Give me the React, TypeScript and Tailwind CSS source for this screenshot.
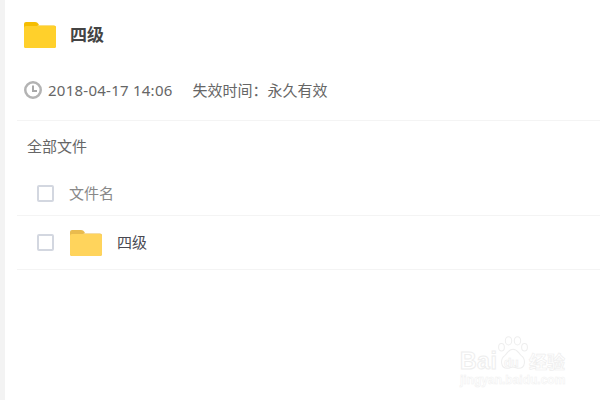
function FolderIcon({ tab, body }: { tab: string; body: string }) {
  return (
    <svg width="32" height="26" viewBox="0 0 32 26" className="shrink-0">
      <path d="M0 2a2 2 0 0 1 2-2h9c2 0 3 1 4 3h-15z" fill={tab} />
      <path d="M0 3h13l2 .5h15a2 2 0 0 1 2 2V24a2 2 0 0 1-2 2H2a2 2 0 0 1-2-2z" fill={tab} />
      <rect x="0" y="4" width="32" height="22" rx="2" fill={body} />
    </svg>
  );
}

function ClockIcon() {
  return (
    <svg width="18" height="18" viewBox="0 0 18 18" fill="none" className="shrink-0">
      <circle cx="9" cy="9" r="7.75" stroke="#b3b3b3" strokeWidth="2.5" />
      <path d="M9 4.5V10h4" stroke="#a8a8a8" strokeWidth="2" />
    </svg>
  );
}

function Checkbox() {
  return <span className="block size-[17px] shrink-0 rounded-[2px] border-2 border-[#d3d7e0] bg-white" />;
}

function Watermark() {
  return (
    <div className="absolute left-[460px] top-[335px] h-[52px] w-[108px] font-['Liberation_Sans',sans-serif] text-white">
      <span className="absolute left-0 top-[15px] text-[23px] font-bold leading-none tracking-[0.5px] [-webkit-text-stroke:1px_#eeeeee]">
        Bai
      </span>
      <svg width="32" height="36" viewBox="0 0 50 52" fill="none" stroke="#eeeeee" strokeWidth="1.6" className="absolute left-[37px] top-0">
        <ellipse cx="7" cy="17" rx="4.5" ry="6" />
        <ellipse cx="18" cy="7" rx="5" ry="6.5" />
        <ellipse cx="32" cy="7" rx="5" ry="6.5" />
        <ellipse cx="43" cy="17" rx="4.5" ry="6" />
        <path d="M25 20c-7 0-8 6-13 10-7 5-7 20 4 20 3 0 6-2 9-2s6 2 9 2c11 0 11-15 4-20-5-4-6-10-13-10z" />
      </svg>
      <span className="absolute left-[44px] top-[22px] text-[12px] font-bold leading-none text-white [-webkit-text-stroke:0.6px_#eeeeee]">
        du
      </span>
      <span className="absolute left-[69px] top-[17px] font-['Noto_Sans_CJK_SC',sans-serif] text-[18px] font-bold leading-none [-webkit-text-stroke:0.7px_#eeeeee]">
        经验
      </span>
      <span className="absolute left-0 top-[39px] text-[12px] font-bold leading-none [-webkit-text-stroke:0.5px_#f0f0f0]">
        jingyan.baidu.com
      </span>
    </div>
  );
}

export default function App() {
  return (
    <div className="relative flex h-[400px] w-[600px] overflow-hidden bg-white font-['Noto_Sans','Noto_Sans_CJK_SC',sans-serif]">
      <div className="w-[5px] shrink-0 bg-[#f3f3f3]" />
      <main className="min-w-0 flex-1 pl-[12px]">
        <div className="flex h-[121px] flex-col border-b border-[#f4f4f4] pl-[7px]">
          <div className="flex items-center gap-[14px] pt-[19px]">
            <FolderIcon tab="#f5bd00" body="#ffd02b" />
            <h1 className="-translate-y-[1px] font-['Noto_Sans_CJK_SC',sans-serif] text-[17px] font-bold leading-[32px] text-[#444444]">四级</h1>
          </div>
          <div className="mt-[29px] flex items-center text-[15px] leading-[20px] text-[#666666]">
            <ClockIcon />
            <span className="ml-[6px] tracking-[0.25px]">2018-04-17 14:06</span>
            <span className="ml-[20px] font-['Noto_Sans_CJK_SC',sans-serif]">失效时间：永久有效</span>
          </div>
        </div>
        <div className="pl-[10px] pt-[15px] font-['Noto_Sans_CJK_SC',sans-serif] text-[15px] leading-[20px] text-[#666666]">
          全部文件
        </div>
        <div className="mt-[16px] flex h-[44px] items-center gap-[15px] border-b border-[#f4f4f4] pl-[20px] pb-[1px] font-['Noto_Sans_CJK_SC',sans-serif] text-[15px] text-[#888888]">
          <Checkbox />
          <span>文件名</span>
        </div>
        <div className="flex h-[54px] items-center border-b border-[#f4f4f4] pl-[20px] font-['Noto_Sans_CJK_SC',sans-serif] text-[15px] text-[#4a4a52]">
          <Checkbox />
          <span className="ml-[16px]">
            <FolderIcon tab="#e9bb4e" body="#ffd45c" />
          </span>
          <span className="ml-[15px]">四级</span>
        </div>
      </main>
      <Watermark />
    </div>
  );
}
